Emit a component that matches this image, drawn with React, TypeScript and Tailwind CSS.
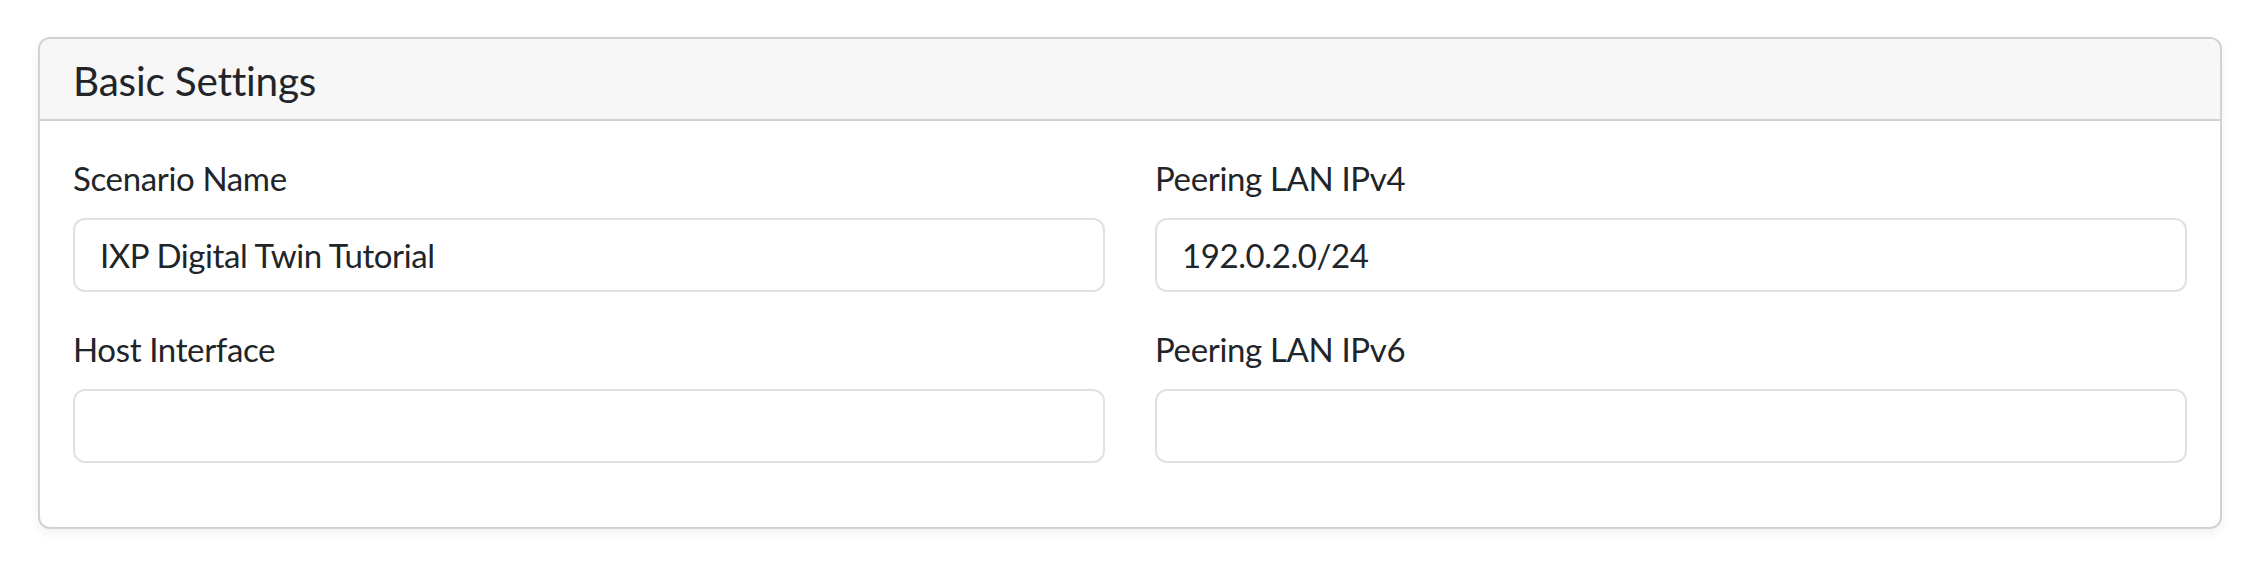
import React, { useState } from 'react';

interface Field {
  key: string;
  label: string;
  value: string;
}

const fields: Field[] = [
  { key: 'scenario_name', label: 'Scenario Name', value: 'IXP Digital Twin Tutorial' },
  { key: 'peering_ipv4', label: 'Peering LAN IPv4', value: '192.0.2.0/24' },
  { key: 'host_interface', label: 'Host Interface', value: '' },
  { key: 'peering_ipv6', label: 'Peering LAN IPv6', value: '' },
];

const App: React.FC = () => {
  const [formData, setFormData] = useState<Record<string, string>>(
    Object.fromEntries(fields.map((f) => [f.key, f.value])),
  );

  const handleChange = (e: React.ChangeEvent<HTMLInputElement>) => {
    const { name, value } = e.target;
    setFormData((prev) => ({ ...prev, [name]: value }));
  };

  return (
    <div className="h-[565px] w-full bg-white pl-[38px] pt-[37px] font-['Lato','Liberation_Sans',sans-serif] text-[#212529]">
      <div className="w-[2184px] overflow-hidden rounded-[12px] border-2 border-[#d2d2d2] bg-white shadow-[0_4px_12px_rgba(0,0,0,0.06)]">
        {/* Header */}
        <div className="flex h-[82px] items-center border-b-2 border-[#d2d2d2] bg-[#f7f7f7] px-[33px] pt-[5px]">
          <h5 className="text-[40.5px] leading-[1.2] tracking-[-0.2px]">Basic Settings</h5>
        </div>

        {/* Body */}
        <div className="grid grid-cols-2 gap-x-[50px] gap-y-[32px] px-[33px] pb-[64px] pt-[32px]">
          {fields.map((f) => (
            <div key={f.key}>
              <label className="mb-[14px] block text-[33px] leading-[51px] tracking-[-0.35px]">
                {f.label}
              </label>
              <input
                type="text"
                name={f.key}
                value={formData[f.key]}
                onChange={handleChange}
                className="block h-[74px] w-full rounded-[12px] border-2 border-[#dee2e6] bg-white px-[25px] text-[33px] tracking-[-0.4px] text-[#212529] outline-none"
              />
            </div>
          ))}
        </div>
      </div>
    </div>
  );
};

export default App;
